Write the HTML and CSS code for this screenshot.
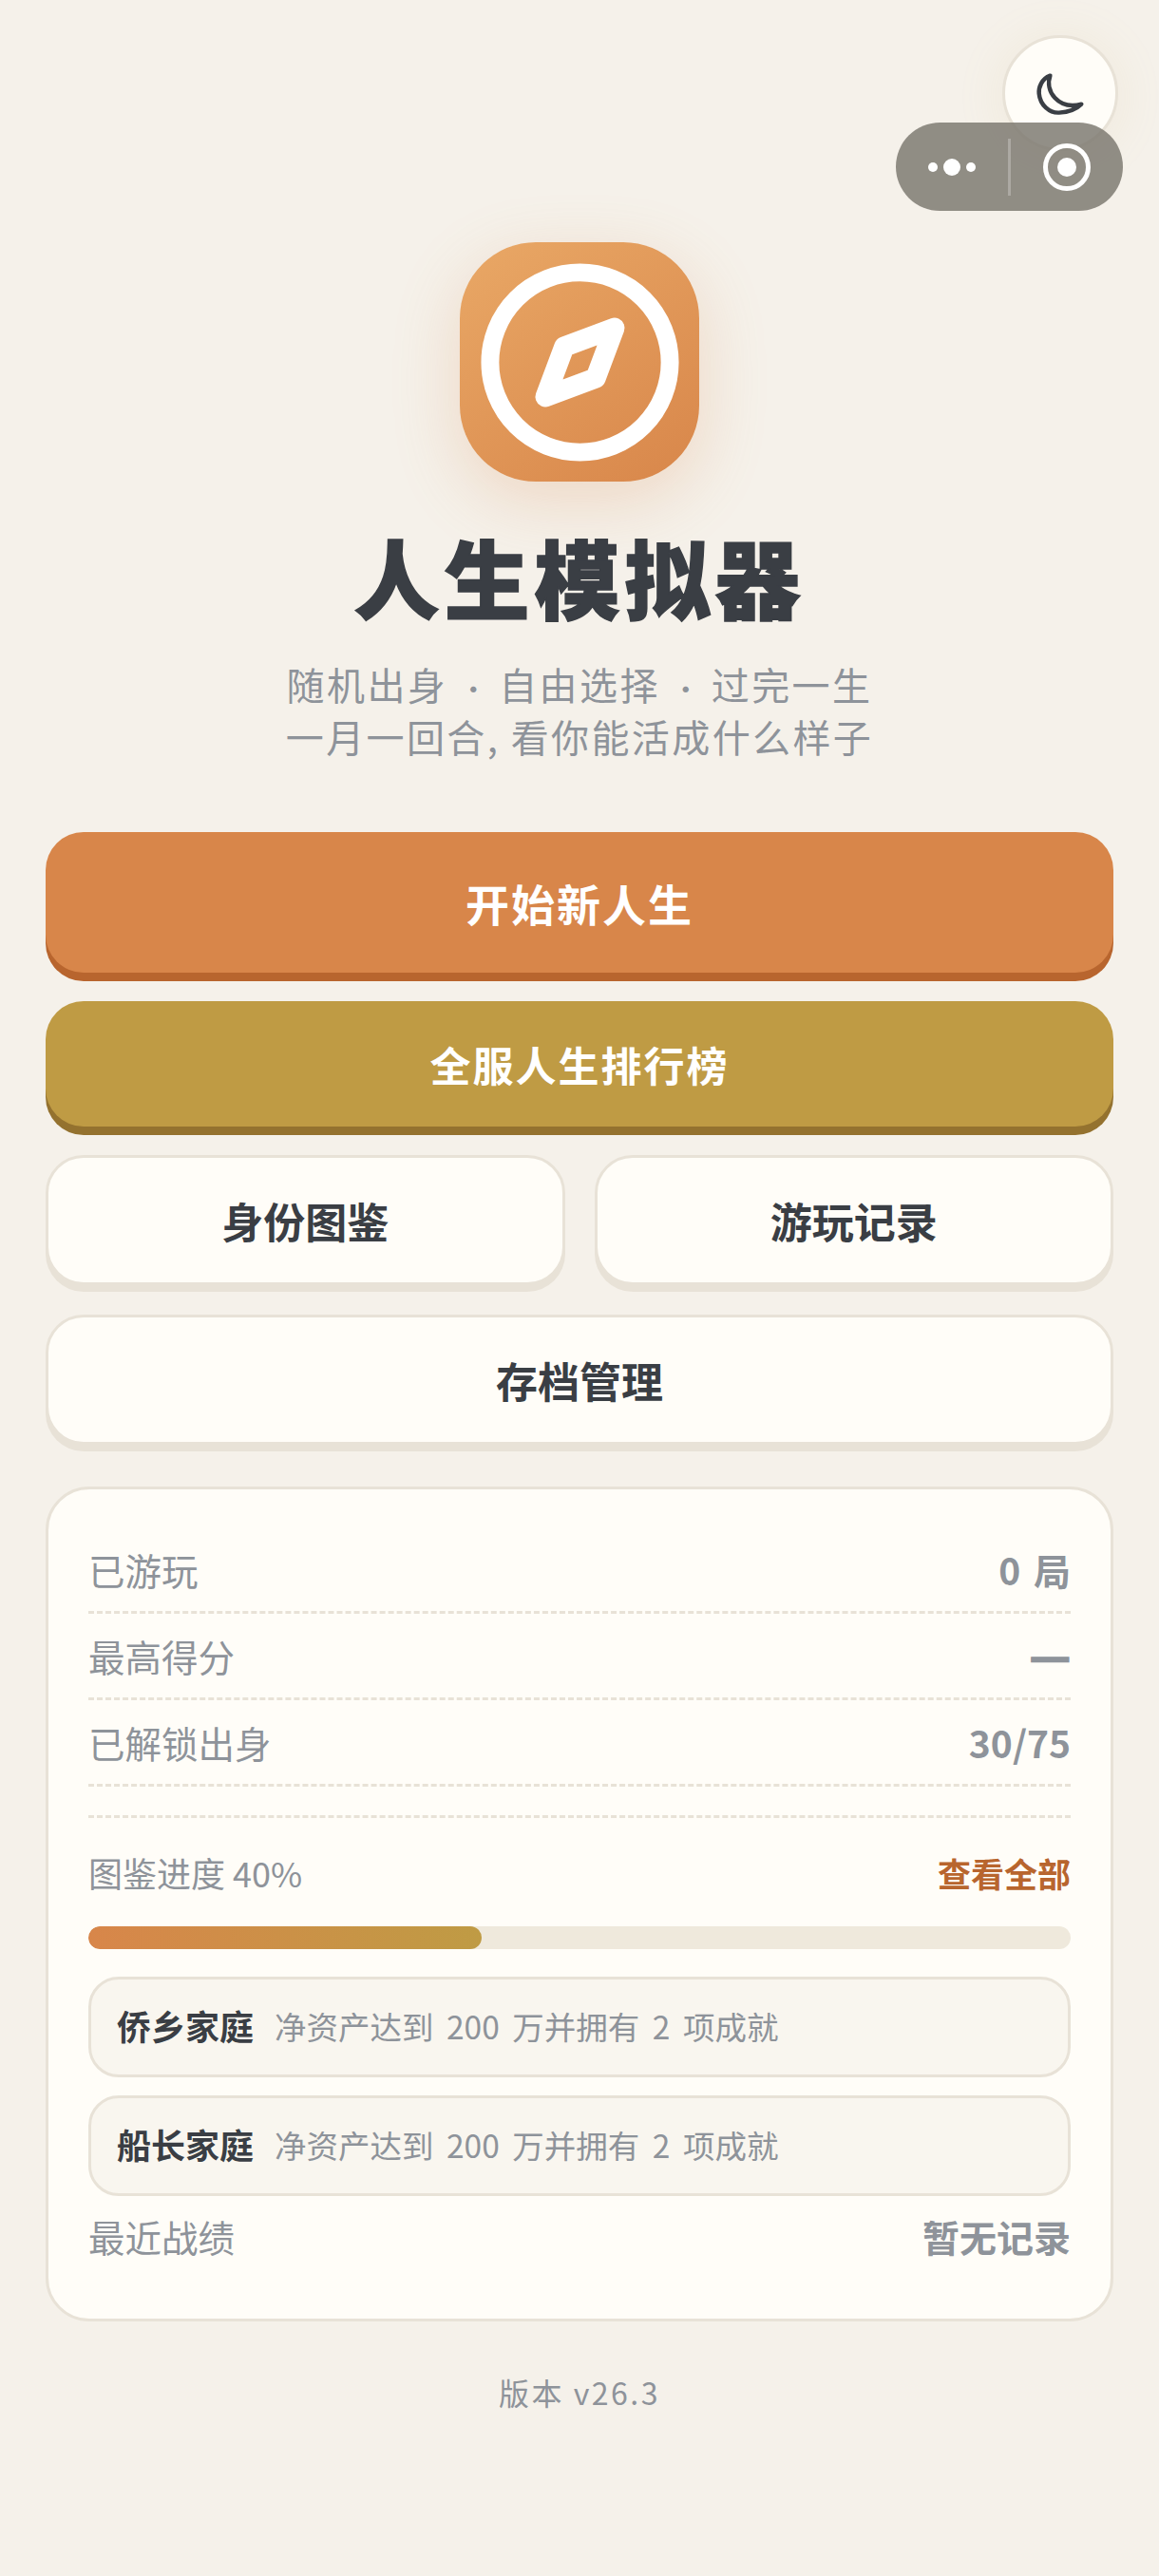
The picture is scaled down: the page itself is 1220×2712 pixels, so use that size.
FILE: index.html
```html
<!DOCTYPE html>
<html lang="zh-CN">
<head>
  <meta charset="UTF-8">
  <title>人生模拟器</title>
  <link rel="stylesheet" href="styles.css">
</head>
<body>

<!-- 主题切换 + 小程序胶囊 -->
<div class="theme-btn">
  <svg class="moon-icon" viewBox="1 -3.5 70 70">
    <path d="M26.5 15C18.5 18 15.5 26 16 32C17 43 26 50.5 35 50C44 49.5 51 47 56 42C46 44.5 37 42.5 31 36C25.5 30 24 22 26.5 15Z"></path>
  </svg>
</div>
<div class="capsule">
  <div class="capsule-dots">
    <span class="dot"></span>
    <span class="dot dot-big"></span>
    <span class="dot"></span>
  </div>
  <div class="capsule-line"></div>
  <div class="capsule-target"><span></span></div>
</div>

<!-- 标题区 -->
<div class="hero">
  <div class="logo">
    <svg class="logo-icon" viewBox="0 0 24 24">
      <circle cx="12" cy="12" r="10"></circle>
      <polygon points="15.84 8.16 13.75 13.75 8.16 15.84 10.25 10.25"></polygon>
    </svg>
  </div>
  <h1 class="title">人生模拟器</h1>
  <p class="subtitle">随机出身<span class="sep">·</span>自由选择<span class="sep">·</span>过完一生<br>一月一回合, 看你能活成什么样子</p>
</div>

<!-- 按钮 -->
<div class="actions">
  <button class="btn btn-start">开始新人生</button>
  <button class="btn btn-rank">全服人生排行榜</button>
  <div class="btn-row">
    <button class="btn btn-plain">身份图鉴</button>
    <button class="btn btn-plain">游玩记录</button>
  </div>
  <button class="btn btn-plain">存档管理</button>
</div>

<!-- 统计卡片 -->
<div class="card">
  <div class="stat-row"><span>已游玩</span><b class="count">0 局</b></div>
  <div class="stat-row"><span>最高得分</span><b class="dash">—</b></div>
  <div class="stat-row"><span>已解锁出身</span><b>30/75</b></div>
  <div class="stat-row stat-empty"></div>

  <div class="info-row progress-head"><span>图鉴进度 40%</span><b class="link">查看全部</b></div>
  <div class="progress"><div class="progress-fill" style="width: 40%"></div></div>

  <div class="chip"><b>侨乡家庭</b><span>净资产达到 200 万并拥有 2 项成就</span></div>
  <div class="chip chip-last"><b>船长家庭</b><span>净资产达到 200 万并拥有 2 项成就</span></div>

  <div class="info-row recent"><span>最近战绩</span><b>暂无记录</b></div>
</div>

<div class="version">版本 v26.3</div>

</body>
</html>
```

FILE: styles.css
```css
body {
  margin: 0;
  min-height: 2712px;
  padding: 255px 48px 0;
  box-sizing: border-box;
  position: relative;
  background-color: #f5f1ea;
  color: #3a3e44;
  font-family: "Noto Sans CJK SC", "Noto Sans", sans-serif;
}

/* 右上角 */
.theme-btn {
  position: absolute;
  top: 37px;
  left: 1055px;
  width: 122px;
  height: 122px;
  box-sizing: border-box;
  border: 3px solid #e8e2d7;
  border-radius: 50%;
  background-color: #fffdf8;
  box-shadow: 0 4px 50px rgba(216, 190, 130, 0.14);
  display: flex;
  align-items: center;
  justify-content: center;
}

.moon-icon {
  width: 78px;
  height: 78px;
  fill: none;
  stroke: #3a3e44;
  stroke-width: 4;
  stroke-linecap: round;
  stroke-linejoin: round;
}

.capsule {
  position: absolute;
  top: 129px;
  left: 943px;
  width: 239px;
  height: 93px;
  border-radius: 47px;
  background-color: rgba(122, 118, 110, 0.82);
  display: flex;
  align-items: center;
}

.capsule-dots {
  width: 118px;
  display: flex;
  align-items: center;
  justify-content: center;
  gap: 6px;
}

.dot {
  width: 10px;
  height: 10px;
  border-radius: 50%;
  background-color: #fff;
}

.dot-big {
  width: 18px;
  height: 18px;
}

.capsule-line {
  width: 3px;
  height: 60px;
  background-color: rgba(255, 255, 255, 0.25);
}

.capsule-target {
  flex: 1;
  display: flex;
  justify-content: center;
}

.capsule-target span {
  width: 50px;
  height: 50px;
  box-sizing: border-box;
  border: 5px solid #fff;
  border-radius: 50%;
  display: flex;
  align-items: center;
  justify-content: center;
}

.capsule-target span::after {
  content: "";
  width: 20px;
  height: 20px;
  border-radius: 50%;
  background-color: #fff;
}

/* 标题区 */
.hero {
  text-align: center;
}

.logo {
  width: 252px;
  height: 252px;
  margin: 0 auto;
  border-radius: 80px;
  background: linear-gradient(145deg, #e9a866, #d8864a);
  box-shadow: 0 20px 70px rgba(216, 134, 74, 0.24);
  display: flex;
  align-items: center;
  justify-content: center;
}

.logo-icon {
  width: 227px;
  height: 227px;
  fill: none;
  stroke: #fff;
  stroke-width: 2;
  stroke-linecap: round;
  stroke-linejoin: round;
}

.logo-icon polygon {
  stroke-width: 2.26;
}

.title {
  margin: 49px 0 0;
  font-size: 90px;
  line-height: 100px;
  font-weight: 900;
  letter-spacing: 5px;
  -webkit-text-stroke: 1.5px #3a3e44;
}

.subtitle {
  margin: 37px 0 0;
  font-size: 40px;
  line-height: 55px;
  letter-spacing: 2.4px;
  color: #8e939a;
}

.sep {
  display: inline-block;
  width: 54px;
  text-align: center;
  letter-spacing: 0;
  font-size: 30px;
  line-height: 1;
}

/* 按钮 */
.actions {
  margin-top: 73px;
  display: flex;
  flex-direction: column;
  gap: 21px;
}

.btn {
  display: block;
  width: 100%;
  border: none;
  padding: 0;
  font-family: inherit;
  font-weight: 700;
  cursor: pointer;
}

.btn-start {
  height: 148px;
  margin-bottom: 9px;
  border-radius: 40px;
  background-color: #d8864a;
  box-shadow: 0 9px 0 #b8652e;
  color: #fff;
  font-size: 46px;
  letter-spacing: 2px;
}

.btn-rank {
  height: 132px;
  margin-bottom: 9px;
  border-radius: 40px;
  background-color: #bf9b44;
  box-shadow: 0 9px 0 #94722f;
  color: #fff;
  font-size: 43px;
  letter-spacing: 2px;
}

.btn-plain {
  height: 137px;
  margin-bottom: 7px;
  box-sizing: border-box;
  border: 3px solid #e8e2d7;
  border-radius: 40px;
  background-color: #fffdf8;
  box-shadow: 0 7px 0 #e8e2d7;
  color: #3a3e44;
  font-size: 44px;
}

.btn-row {
  display: flex;
  gap: 31px;
  margin-bottom: 3px;
}

/* 统计卡片 */
.card {
  margin-top: 37px;
  padding: 40px 42px 60px;
  border: 3px solid #e8e2d7;
  border-radius: 46px;
  background-color: #fffdf8;
  font-size: 38.5px;
  color: #8e939a;
}

.stat-row {
  height: 91px;
  box-sizing: border-box;
  border-bottom: 3px dashed #e8e2d7;
  display: flex;
  align-items: center;
  justify-content: space-between;
}

.stat-row b,
.info-row b {
  font-size: 39px;
}

.stat-row .count {
  word-spacing: 5px;
}

.stat-row .dash {
  padding-bottom: 6px;
  font-size: 48px;
  -webkit-text-stroke: 1.5px #8e939a;
}

.stat-empty {
  height: 33px;
}

.info-row {
  height: 54px;
  display: flex;
  align-items: center;
  justify-content: space-between;
}

.progress-head {
  margin-top: 30px;
  font-size: 36px;
}

.info-row .link {
  color: #b8652e;
  font-size: 35px;
}

.progress {
  height: 24px;
  margin: 30px 0 29px;
  border-radius: 12px;
  background-color: #efe9dc;
  overflow: hidden;
}

.progress-fill {
  height: 100%;
  border-radius: 12px;
  background: linear-gradient(90deg, #d8864a, #bf9b44);
}

.chip {
  height: 106px;
  box-sizing: border-box;
  margin-bottom: 19px;
  padding: 0 27px 4px;
  border: 3px solid #e8e2d7;
  border-radius: 32px;
  background-color: #f9f6ef;
  display: flex;
  align-items: center;
  gap: 22px;
}

.chip-last {
  margin-bottom: 15px;
}

.chip b {
  font-size: 36px;
  color: #3a3e44;
}

.chip span {
  font-size: 33.5px;
  word-spacing: 6px;
}

.version {
  margin-top: 49px;
  text-align: center;
  font-size: 32px;
  line-height: 50px;
  letter-spacing: 2.5px;
  color: #8e939a;
}
```
